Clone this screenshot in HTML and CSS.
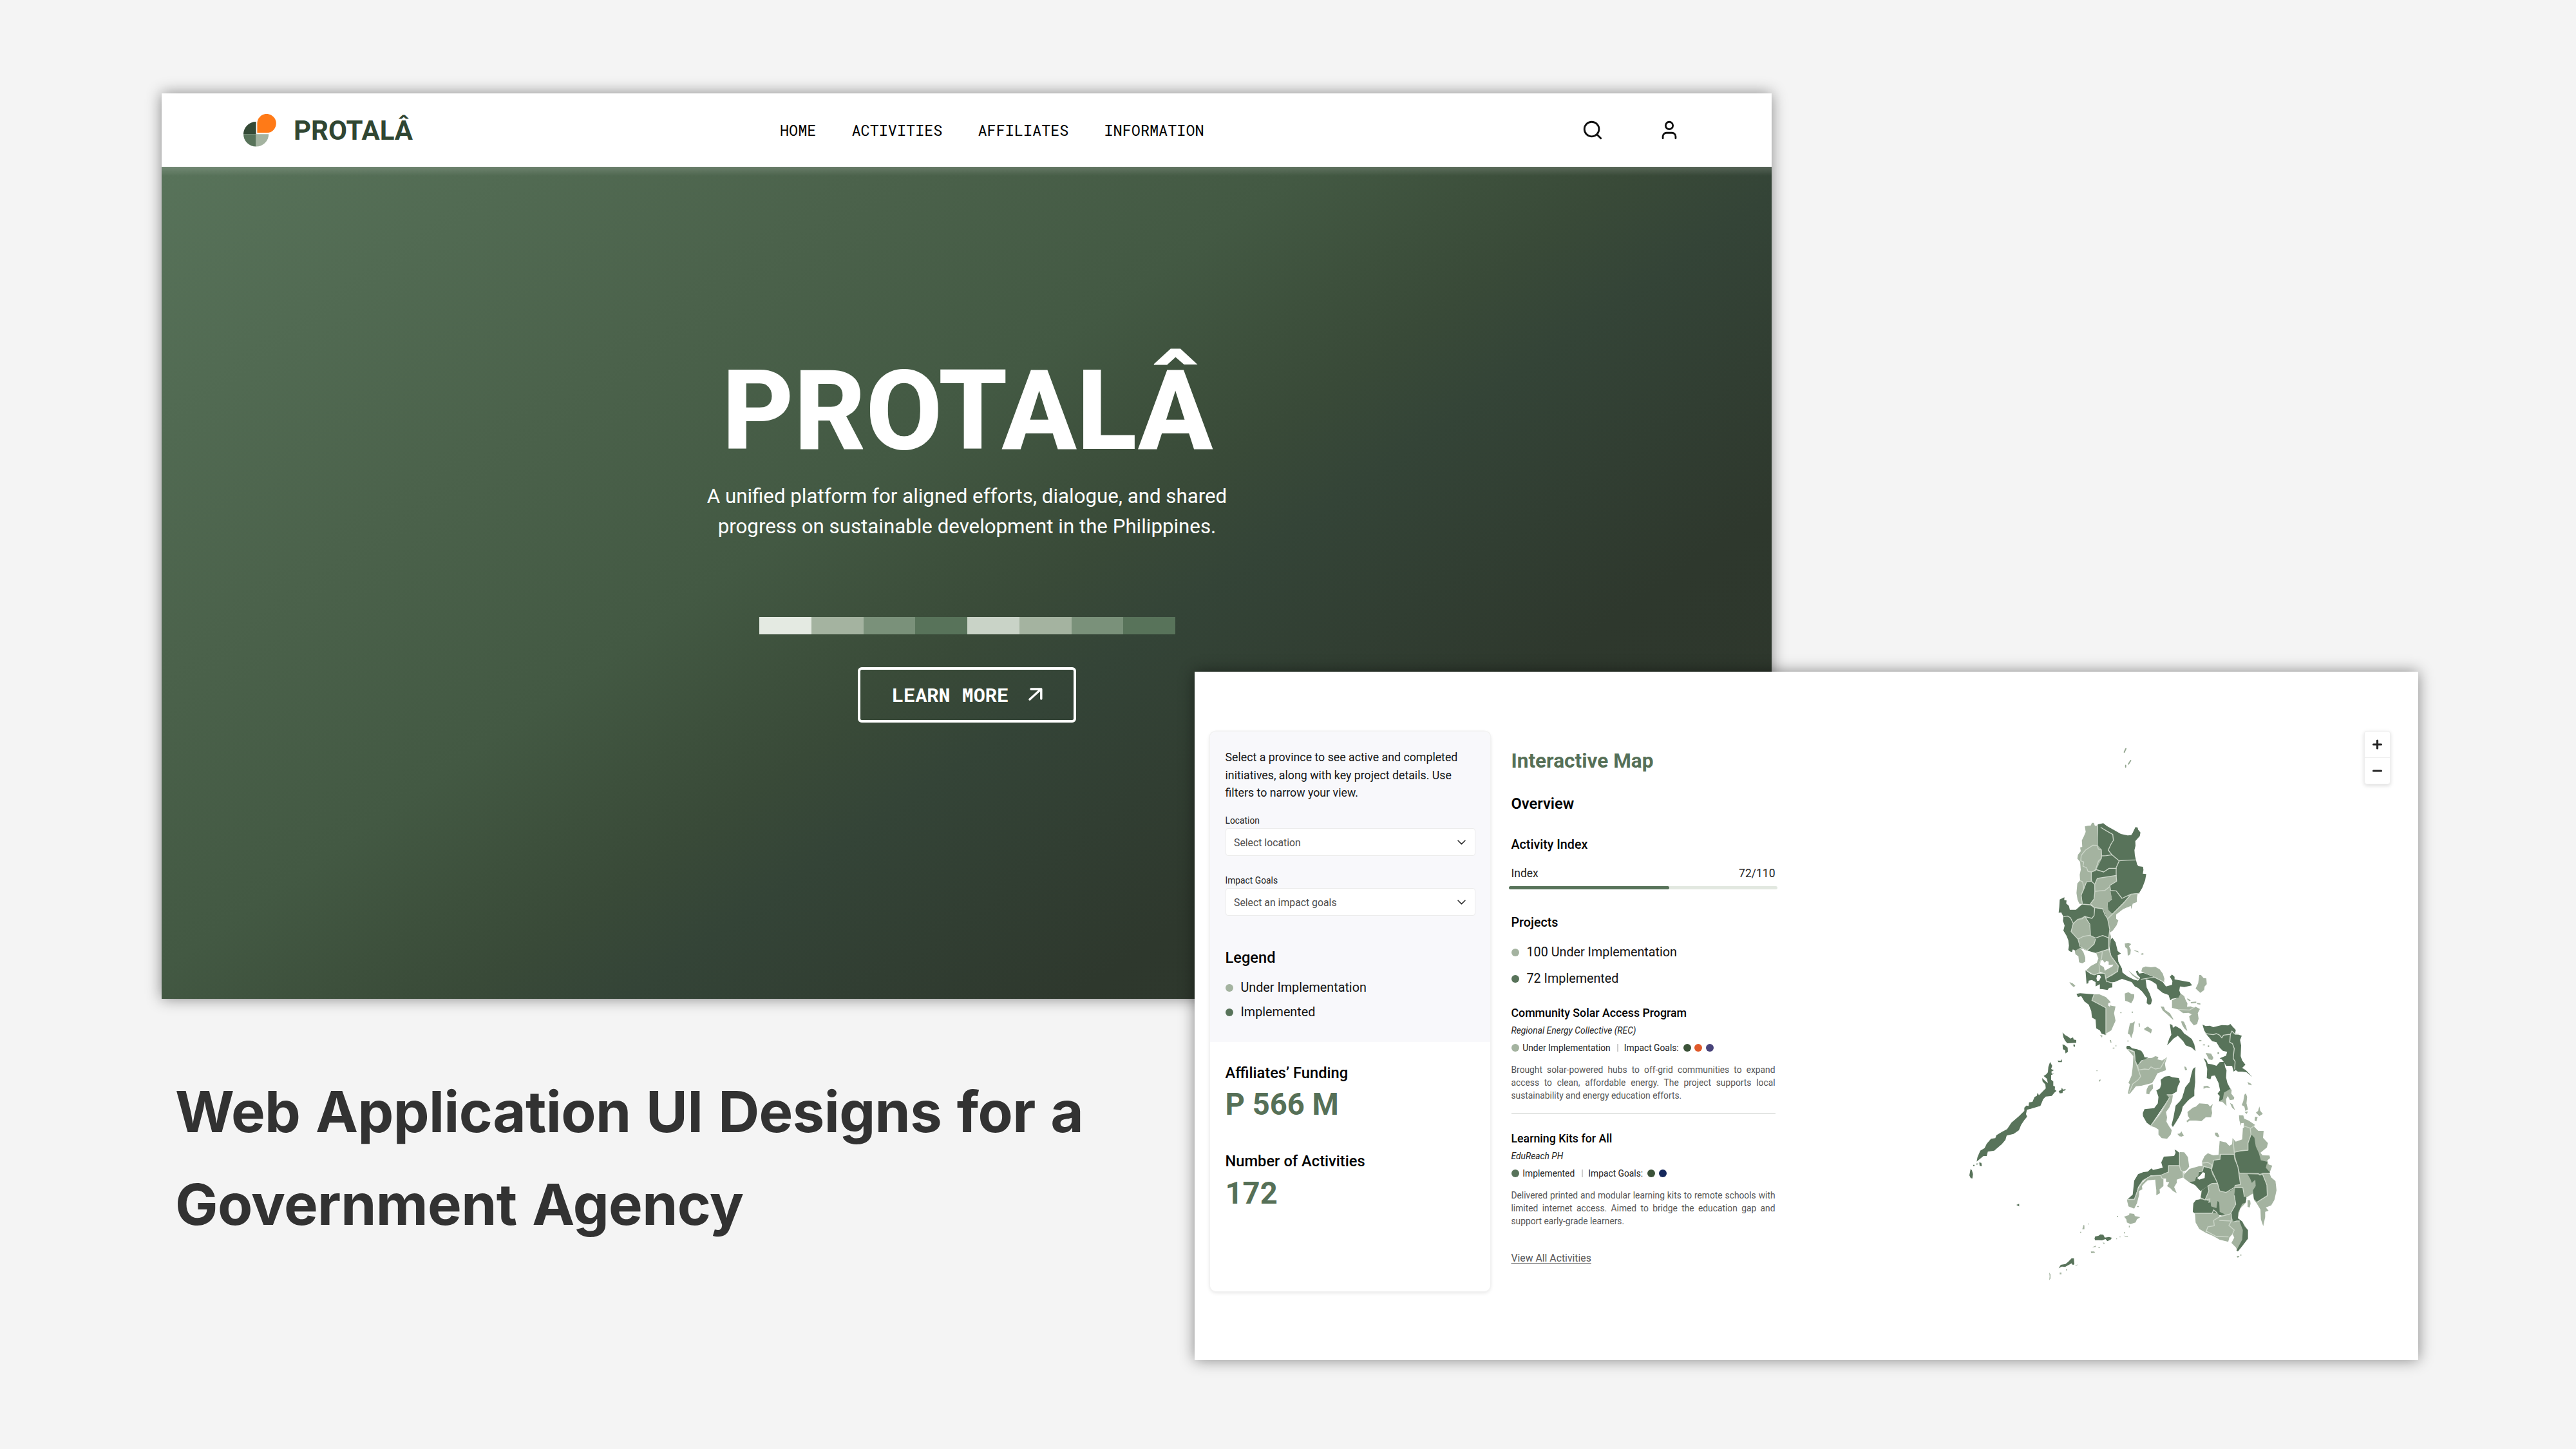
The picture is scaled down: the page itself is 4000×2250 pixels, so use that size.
FILE: index.html
```html
<!DOCTYPE html>
<html lang="en">
<head>
<meta charset="utf-8">
<title>Protalâ</title>
<link rel="stylesheet" href="styles.css">
</head>
<body>
<main class="canvas">
  <section class="window window-home">
    <header class="nav">
      <div class="brand">
        <svg class="brand-mark" viewBox="0 0 51 51" width="51" height="51">
          <path d="M19.6 12V31.3H0A19.6 19.3 0 0 1 19.6 12Z" fill="#344a36"/>
          <path d="M0 31.3H19.6V50.6A19.6 19.3 0 0 1 0 31.3Z" fill="#58735a"/>
          <path d="M19.6 31.3H39.2A19.6 19.3 0 0 1 19.6 50.6Z" fill="#a4b3a0"/>
          <path d="M20 31V15A15.500 15.500 0 1 1 36 30.500L36 31Z" fill="#fff"/>
          <path d="M21.400 29.300V14.600A14.700 14.700 0 1 1 36.200 29.300Z" fill="#ff7a17"/>
        </svg>
        <span class="brand-name">PROTALÂ</span>
      </div>
      <nav class="links"><a>HOME</a><a>ACTIVITIES</a><a>AFFILIATES</a><a>INFORMATION</a></nav>
      <div class="tools">
        <svg viewBox="0 0 24 24" class="icon"><circle cx="11" cy="11" r="8"/><path d="M21 21l-4.300-4.300"/></svg>
        <svg viewBox="0 0 24 24" class="icon"><circle cx="12" cy="7" r="4"/><path d="M5 21v-2a4 4 0 0 1 4-4h6a4 4 0 0 1 4 4v2"/></svg>
      </div>
    </header>
    <div class="hero">
      <h1 class="hero-title">PROTALÂ</h1>
      <p class="hero-sub">A unified platform for aligned efforts, dialogue, and shared<br>progress on sustainable development in the Philippines.</p>
      <div class="swatches"><i class="s1"></i><i class="s2"></i><i class="s3"></i><i class="s4"></i><i class="s5"></i><i class="s2"></i><i class="s3"></i><i class="s4"></i></div>
      <a class="button">LEARN MORE
        <svg viewBox="0 0 22 20" width="22" height="20"><path d="M2 18L19.500 2M4 2H19.800V17" fill="none" stroke="#fff" stroke-width="3.400" stroke-linecap="round" stroke-linejoin="round"/></svg>
      </a>
    </div>
  </section>

  <h2 class="headline">Web Application UI Designs for a<br>Government Agency</h2>

  <section class="window window-map">
    <aside class="card">
      <div class="filters">
        <p class="intro">Select a province to see active and completed initiatives, along with key project details. Use filters to narrow your view.</p>
        <label class="label">Location</label>
        <div class="select">Select location<svg viewBox="0 0 12 8" class="chevron"><path d="M1 1l5 5 5-5"/></svg></div>
        <label class="label label-second">Impact Goals</label>
        <div class="select">Select an impact goals<svg viewBox="0 0 12 8" class="chevron"><path d="M1 1l5 5 5-5"/></svg></div>
        <h3 class="legend-title">Legend</h3>
        <div class="key"><i class="dot light"></i>Under Implementation</div>
        <div class="key key-next"><i class="dot dark"></i>Implemented</div>
      </div>
      <div class="stats">
        <h4 class="stat-label">Affiliates’ Funding</h4>
        <p class="stat-value">P 566 M</p>
        <h4 class="stat-label stat-second">Number of Activities</h4>
        <p class="stat-value">172</p>
      </div>
    </aside>
    <div class="details">
      <h2 class="map-title">Interactive Map</h2>
      <h3 class="overview">Overview</h3>
      <h4 class="sub activity">Activity Index</h4>
      <div class="index-row"><span>Index</span><span>72/110</span></div>
      <div class="track"><div class="fill"></div></div>
      <h4 class="sub projects">Projects</h4>
      <div class="key count-first"><i class="dot light"></i>100 Under Implementation</div>
      <div class="key count-next"><i class="dot dark"></i>72 Implemented</div>
      <article class="project">
        <h5 class="project-title">Community Solar Access Program</h5>
        <p class="org">Regional Energy Collective (REC)</p>
        <div class="status"><i class="dot light"></i><span class="state">Under Implementation</span><i class="bar"></i><span class="goals">Impact Goals:</span><i class="dot forest"></i><i class="dot orange"></i><i class="dot violet"></i></div>
        <p class="desc">Brought solar-powered hubs to off-grid communities to expand access to clean, affordable energy. The project supports local sustainability and energy education efforts.</p>
      </article>
      <hr class="rule">
      <article class="project second">
        <h5 class="project-title">Learning Kits for All</h5>
        <p class="org">EduReach PH</p>
        <div class="status"><i class="dot dark"></i><span class="state">Implemented</span><i class="bar"></i><span class="goals">Impact Goals:</span><i class="dot forest"></i><i class="dot navy"></i></div>
        <p class="desc">Delivered printed and modular learning kits to remote schools with limited internet access. Aimed to bridge the education gap and support early-grade learners.</p>
      </article>
      <a class="view-all">View All Activities</a>
    </div>
    <div class="map">
      <svg class="islands" viewBox="3020 1136 620 870" width="620" height="870">
        <!-- Batanes -->
        <g class="hair"><path d="M3298.500 1168l2.600-5.500M3305 1186.500l3.500-5.500M3300.700 1188.500v2.500"/></g>
        <!-- Luzon, Mindoro, Bicol -->
        <g transform="translate(3030 1230) scale(.33333)">
          <g class="fl">
            <path d="M622,160 L635,157 650,155 655,143 664,143 668,155 675,158 683,150 680,245 700,268 700,310 672,368 652,372 652,415 630,418 620,450 605,480 610,522 596,520 588,500 583,470 587,425 600,412 598,385 603,362 600,325 587,310 590,292 603,275 600,258 610,255 608,225 618,205 626,185Z"/>
            <path d="M885,835 L890,818 905,812 930,816 950,814 970,825 985,845 993,870 990,885 945,860 905,845Z"/>
            <path d="M575,738 L600,725 615,745 624,770 624,790 610,797 595,793 592,765 578,755Z"/>
            <path d="M550,885 L565,890 578,902 570,908 558,898ZM808,705 L825,702 838,708 828,718 836,735 834,755 822,763 820,730 810,722ZM850,735l20,6 4,6-18,-6ZM882,753l12,-3 2,5-8,3Z"/>
            <path d="M825,830 L850,852 875,868 868,872 842,852Z"/>
            <path d="M808,938 L825,932 838,940 852,942 852,955 846,970 838,983 822,976 810,972Z"/>
            <path d="M1155,852 L1163,852 1175,866 1188,868 1190,895 1180,905 1178,922 1160,935 1138,915 1150,890Z"/>
            <path d="M1028,970 L1060,955 1068,938 1085,950 1090,965 1100,985 1098,1000 1115,998 1130,1005 1138,1000 1158,1010 1148,1030 1152,1055 1145,1080 1130,1087 1112,1065 1108,1045 1120,1035 1105,1028 1080,1030 1055,1012 1028,1005Z"/>
            <path d="M1100,960l15,10-4,4-12,-8ZM1115,978l26,-2 0,6-24,2ZM1143,982l17,2 0,6-14,-2Z"/>
            <path d="M975,998 L990,1000 996,1015 1018,1030 1035,1058 1032,1060 1005,1035 985,1018Z"/>
            <path d="M1070,1068 L1082,1070 1092,1088 1098,1112 1085,1100 1076,1085Z"/>
            <path d="M832,1078 L845,1074 855,1068 851,1090 848,1115 838,1147 832,1130 822,1125Z"/>
            <path d="M898,1102 L915,1092 935,1106 930,1124 918,1116 900,1108Z"/>
            <path d="M872,1078h6v16h-4ZM787,1025h6v5h-6ZM840,1022h6v6h-6ZM820,1157h6v5h-6ZM692,1130l12,4-2,10ZM738,1155l6,0 2,12-4,0ZM752,1190l8,0 0,5-8,0ZM765,1178h4v7h-4Z"/>
          </g>
          <g class="fd">
            <path d="M683,150 L708,145 725,158 760,178 790,195 822,202 838,200 845,190 852,175 858,163 868,165 870,175 881,188 878,205 857,228 858,250 853,270 855,295 860,316 866,338 872,345 893,348 895,362 892,380 908,382 903,410 890,445 875,470 840,475 750,568 730,548 728,515 748,500 740,460 735,440 668,430 655,415 652,372 672,368 700,310 700,268 680,245Z"/>
            <path d="M630,418 L652,415 668,430 665,500 648,525 612,522 605,480 620,450Z"/>
            <path d="M505,500 L522,492 527,490 526,503 537,505 535,518 548,530 552,548 580,548 610,522 648,525 668,538 710,545 728,590 738,640 735,730 675,750 632,738 600,725 578,738 566,733 562,745 552,742 545,735 548,715 545,690 537,670 522,645 528,622 520,600 522,580 512,560 500,562 503,535Z"/>
            <path d="M740,690 L750,678 765,700 775,740 790,752 775,760 778,790 795,822 797,840 820,858 850,873 870,878 880,865 865,850 860,835 868,832 875,845 895,842 945,862 985,885 1000,905 1028,898 1030,880 1018,860 1028,850 1040,860 1040,872 1080,880 1110,885 1122,900 1085,908 1065,905 1062,925 1068,940 1058,958 1030,962 1020,970 1012,945 985,935 960,915 955,895 930,878 905,872 910,910 925,940 935,970 930,988 920,990 910,983 912,960 890,930 870,912 855,905 840,885 795,870 760,885 725,888 718,870 775,835 778,810 745,765 738,730Z"/>
            <path d="M625,830 L650,848 665,852 690,845 715,845 722,885 750,890 750,910 735,912 728,922 705,918 692,917 692,895 672,905 672,885 655,875 640,878 638,890 630,893Z"/>
            <path d="M583,940 L600,937 665,942 655,970 720,1005 720,1132 700,1125 692,1110 675,1100 672,1060 655,1050 652,1020 640,990 620,975 605,950 590,955Z"/>
            <path d="M1018,1080 L1030,1085 1032,1098 1045,1090 1070,1105 1085,1125 1100,1135 1120,1150 1132,1175 1138,1207 1120,1190 1092,1180 1080,1160 1055,1135 1035,1148 1020,1165 1005,1180 1015,1148 1025,1130Z"/>
          </g>
          <g class="fl">
            <path d="M680,402 L768,388 770,415 738,435 742,460 748,498 728,515 730,548 750,568 840,475 868,472 864,495 864,512 845,520 838,545 836,530 800,545 768,570 768,590 778,598 770,620 752,645 738,655 744,672 742,700 735,730 733,680 738,640 728,590 710,548 668,538 648,520 665,500 668,430Z"/>
            <path d="M620,578 L632,595 645,620 648,665 672,685 665,708 632,738 605,725 590,685 558,650 568,612 590,592Z"/>
            <path d="M675,750 L733,732 745,765 778,810 775,835 750,855 720,868 715,845 695,838 665,852 628,830 650,810 678,795 685,775Z"/>
            <path d="M665,942 L690,942 720,955 740,975 745,995 765,998 758,1030 765,1065 745,1110 720,1125 720,1005 655,970Z"/>
          </g>
          <g class="fw">
            <path d="M695,785 L705,782 715,795 722,786 733,790 733,805 755,803 750,812 715,832 710,815 693,805Z"/>
            <path d="M680,852l12,0 5,10-8,16-10,2-3,-12ZM732,982l8,-2 6,8-8,12-8,-6Z"/>
          </g>
          <g class="bl">
            <path d="M680,155V245M697,165L725,182 752,197 755,225 745,240 731,270 748,292 782,320 768,352 768,390M603,320L605,295 625,270 660,247 680,248 685,266 698,268 700,297 722,296 748,292M700,297L698,310 685,322 672,362 655,372 637,370 630,352 613,345 617,325 603,320"/>
            <path d="M782,320L820,317 860,316M672,360L710,372 735,355 768,355M652,372V415L668,430 669,462 665,498 648,520M669,462L715,458 738,440M680,402L768,388 770,415 738,435 742,458 768,460 795,495 838,475 875,472M668,430L680,402M835,478L800,520 728,590"/>
            <path d="M600,412L612,418 617,450 630,418 652,415M617,450L605,480 610,522 648,525 668,540 665,575 655,588 630,582 622,578M525,580L540,577 555,585 568,612M568,612L590,592 610,590 622,578 632,595 645,615 648,665M568,612L558,650 590,685 600,720 632,738 665,708 672,685M590,685L615,672 645,667 672,680 705,668 735,680"/>
            <path d="M668,538L705,543 715,570 728,590 738,640 733,680 733,732M675,750L733,732 745,765 778,810 775,835 720,868M703,745L700,775 688,800 690,840M632,832L665,852 690,843 715,845 722,880 750,890M885,872L945,862 993,885M665,942L655,970 720,1005V1130M1058,1013L1110,1015 1130,1003"/>
          </g>
        </g>
        <!-- Visayas and Mindanao -->
        <g transform="translate(3300 1480) scale(.33333)">
          <g class="fl">
            <path d="M375,465 L400,468 411,488 405,498 390,495Z"/>
            <path d="M458,650 L475,640 490,630 496,638 494,655 508,672 506,682 488,685 478,665 470,680 472,712 460,700 452,692 440,692 452,680ZM488,698l12,6 12,28-14,-12Z"/>
            <path d="M290,740 L315,720 330,715 345,700 385,703 395,715 408,703 402,725 405,745 400,765 375,765 355,783 330,780 300,780 290,788 285,782 300,770 292,758Z"/>
            <path d="M195,660 L222,662 218,690 205,720 190,740 195,765 192,785 205,808 217,825 212,845 195,865 170,862 155,845 155,822 140,812 118,805 150,765 205,675Z"/>
            <path d="M243,842 L255,840 262,830 268,842 274,850 262,855 252,853ZM418,836l12,0 9,18-8,4-12,-10Z"/>
            <path d="M10,448 L45,465 48,500 58,522 80,500 100,490 125,488 140,480 155,484 150,495 172,500 195,485 185,515 190,545 150,560 135,590 125,605 75,618 50,620 22,655 12,655 22,610 15,605 30,570 35,530 38,480Z"/>
            <path d="M108,618 L128,610 130,630 115,648 112,658 98,655 100,635Z"/>
            <path d="M562,653 L568,670 565,700 572,728 560,735 555,715 543,708 550,690 555,660ZM556,740l16,-3 -6,12ZM625,714l4,20 12,15-16,10-16,-16 10,-8ZM605,762l12,2 -6,20-8,-4Z"/>
            <path d="M275,528l8,2 6,14-10,2ZM262,316l12,4 16,42-16,-16ZM365,620l18,-2 14,10-20,-2-12,6ZM570,600l16,8 4,8-16,-4ZM345,405h10v5h-10ZM362,425h10v5h-10ZM385,430h6v8h-6ZM430,462h8v8h-8Z"/>
            <path d="M530,755 L550,756 555,772 575,780 605,800 600,808 620,828 645,828 642,860 665,885 660,905 630,930 640,942 672,943 675,955 662,965 668,985 685,990 672,1025 680,1045 700,1062 705,1105 695,1150 680,1175 655,1185 668,1200 652,1205 652,1230 643,1272 632,1240 630,1195 612,1165 600,1150 595,1120 562,1140 560,1165 535,1190 525,1235 545,1250 570,1290 570,1330 525,1388 515,1370 495,1350 508,1325 500,1308 485,1325 480,1345 440,1335 410,1318 375,1303 345,1285 328,1255 325,1212 315,1205 318,1165 350,1145 355,1110 325,1080 298,1067 275,1050 270,1035 300,1005 345,992 360,992 358,970 370,945 385,932 410,942 435,940 440,875 470,882 485,898 498,890 500,862 515,878 545,868 548,820 538,800 532,780Z"/>
            <path d="M255,927 L275,928 292,950 298,995 285,1012 268,1018 270,1045 240,1055 240,1070 228,1090 240,1118 222,1108 210,1095 195,1085 205,1068 190,1065 190,1050 178,1050 178,1085 160,1100 162,1118 145,1128 145,1105 142,1080 140,1055 105,1058 90,1072 78,1085 80,1100 65,1108 65,1125 55,1165 42,1190 15,1180 8,1150 45,1145 65,1085 110,1040 165,1035 200,1020 202,990 252,990Z"/>
            <path d="M570,1150l12,2 2,15-4,18-10,-3Z"/>
            <path d="M520,1410l10,0 2,6-10,2ZM537,1403h4v7h-4Z"/>
          </g>
          <g class="fd">
            <path d="M360,333 L375,340 395,338 410,345 450,335 480,337 490,330 500,342 515,358 512,375 543,385 535,405 540,430 538,480 545,500 560,520 545,535 562,545 592,577 565,555 545,552 525,552 515,545 505,552 498,525 470,525 462,510 450,495 440,490 470,478 475,460 455,455 440,440 425,415 405,410 380,380 368,360Z"/>
            <path d="M365,488 L378,498 385,515 405,518 425,525 440,508 462,506 465,530 472,545 470,580 476,605 490,632 460,650 455,680 437,692 440,665 430,655 442,640 435,605 418,570 402,572 397,588 380,582 382,540 375,510Z"/>
            <path d="M327,530 L325,560 326,600 322,640 322,665 300,680 290,690 268,715 262,740 250,765 235,790 222,810 216,800 225,765 235,710 255,690 265,675 280,625 300,600 308,565 315,540Z"/>
            <path d="M165,590 L185,575 205,572 220,578 250,582 255,600 245,620 240,645 215,660 195,660 205,675 118,803 100,790 83,760 82,745 90,727 135,722 152,700 155,670 145,640 162,630 168,610Z"/>
            <path d="M5,440 L8,432 20,432 32,443 55,448 75,455 85,470 90,485 108,486 90,496 75,500 58,522 48,500 45,465 30,450 8,448Z"/>
            <path d="M448,937 L505,937 508,960 525,995 537,1078 512,1082 508,1095 495,1105 470,1115 440,1105 435,1080 418,1050 402,1010 412,965 442,960Z"/>
            <path d="M365,995 L400,1005 405,1030 430,1072 405,1075 385,1085 350,1108 325,1080 298,1067 325,1062 330,1045 340,1040 345,1018 362,1015Z"/>
            <path d="M385,1085 L390,1108 380,1130 372,1150 352,1138 358,1105ZM318,1165 L330,1150 350,1147 375,1150 398,1162 400,1180 425,1188 430,1155 438,1160 440,1205 465,1217 440,1222 428,1210 405,1210 325,1212 315,1205Z"/>
            <path d="M512,1092 L548,1092 555,1130 565,1140 562,1162 545,1168 535,1190 525,1210 525,1235 545,1250 555,1272 572,1290 572,1330 545,1365 525,1390 518,1385 545,1335 548,1290 532,1248 505,1252 490,1215 515,1170 508,1130Z"/>
            <path d="M588,845 L602,860 608,900 622,930 632,965 662,972 655,1000 675,1022 620,1028 535,1025 522,985 508,928 570,920 572,885Z"/>
            <path d="M570,1030 L640,1032 660,1080 660,1130 615,1160 600,1145 595,1105 608,1085 606,1055 590,1070 582,1050Z"/>
            <path d="M230,915 L240,920 252,930 252,990 202,990 200,1020 165,1035 120,1035 80,1060 60,1090 45,1145 12,1145 35,1125 42,1060 60,1030 85,1020 105,1018 122,1003 130,1010 175,1000 168,975 180,948 228,945 235,930Z"/>
          </g>
          <g class="fw"><path d="M335,1048 L350,1035 362,1020 372,1025 370,1048 345,1055ZM540,793l12,-2 2,20-8,8-6,-12ZM438,1222h10v8h-10Z"/></g>
          <g class="bl">
            <path d="M375,375L410,380 425,375 440,382 450,395 458,382 490,378 497,363 512,378 530,378M490,378L487,415 500,422 508,445 503,490 512,505 510,540"/>
            <path d="M12,449L42,458 46,500 62,545 72,575 60,590 35,610 20,648M60,545L90,540 110,542 120,530 140,540 165,535 190,490M58,522L62,545M195,660H220M205,675L165,745 118,805"/>
            <path d="M503,870L508,928 540,920 572,918 572,885 586,845 582,815 552,805M582,818L602,803M532,1025L620,1027 628,1034 640,1026 672,1026M508,928L512,960 525,995 537,1078 512,1082 510,1092 548,1092 555,1135M442,937H508M442,937V960L412,965 402,1010 430,1072"/>
            <path d="M358,978L385,975 402,985 402,1003 365,993 360,1015 345,1018M385,1085L405,1073 430,1072 440,1108 470,1115 508,1092M385,1085L390,1108 372,1150 352,1140M372,1150L395,1145 390,1162M325,1212H405L412,1196 428,1210M375,1303L385,1275 415,1270 412,1245 440,1228 490,1215 515,1170 508,1130M378,1295L425,1320 480,1322M440,1245L495,1248 483,1268 508,1290 500,1308M495,1215V1245M532,1248L520,1248 505,1252"/>
            <path d="M640,1030L660,1080 662,1130 615,1160M253,930V990L258,1010 268,1018 272,1045M202,1020V990H252M10,1148H42L62,1095 85,1058 120,1038 165,1035 200,1020M165,1035L172,1050 188,1050M270,1045L275,1020"/>
          </g>
        </g>
        <!-- Palawan and the Sulu sea -->
        <g transform="translate(3020 1580) scale(.33333)">
          <g class="fd">
            <path d="M490,207 L500,225 495,240 508,245 496,252 498,262 510,262 495,268 495,290 505,298 505,318 513,322 512,335 520,342 510,350 498,365 470,368 458,380 445,412 400,425 382,430 378,450 383,462 370,478 355,500 345,525 320,542 288,550 282,570 265,590 230,620 200,625 195,645 180,645 148,671 152,650 165,620 185,608 195,588 215,565 235,562 240,548 265,533 290,520 310,490 345,460 370,435 370,420 380,410 390,412 392,395 408,393 418,370 428,365 432,350 438,362 470,330 468,312 455,298 453,282 470,298 480,305 475,285 460,272 472,265 480,255 482,230Z"/>
            <path d="M548,70 L560,82 575,90 585,98 597,92 600,103 612,105 612,118 570,120 560,108 552,92ZM548,125 L558,128 572,140 573,160 562,167 560,152 550,148ZM598,126h8v10h-6ZM525,200l14,2 6,-8 0,14-16,0ZM530,342 L542,338 545,326 550,336 563,333 560,340 550,342 548,352 535,353Z"/>
            <path d="M160,675l10,2 2,16-10,-2ZM145,680l12,0-8,6ZM132,686h6v6h-6ZM120,705 L126,712 131,730 128,750 120,748 114,735ZM333,873L346,868 346,880Z"/>
            <path d="M697,1030 L700,1020 715,1017 725,1010 738,1012 745,1025 765,1022 778,1026 772,1035 757,1042 748,1032 732,1038 715,1037 700,1038ZM530,1168 L540,1152 562,1148 575,1138 590,1122 601,1122 603,1150 596,1153 590,1145 560,1162 545,1160Z"/>
          </g>
          <g class="fl">
            <path d="M835,928 L858,920 860,912 882,915 885,925 910,930 895,940 888,955 865,962 848,955 845,940Z"/>
            <path d="M486,1188l6,8 0,20-6,8 2,-18ZM680,1090l16,0 4,6-18,2ZM686,1070l16,-7 2,6ZM735,1048l10,2-4,6ZM646,966l4,2 0,18-10,0ZM802,924h5v6h-5ZM535,1188h8v8h-8ZM564,1173h5v5h-5ZM605,1158l12,-8 0,4ZM717,292l8,-4 0,6-6,6ZM630,998h5v5h-5ZM666,960h5v4h-5ZM832,1015l12,6 10,-4-4,6-8,0ZM857,970h4v8h-4ZM814,1020h4v4h-4ZM834,1000h5v6h-5ZM798,1029h4v4h-4ZM715,1071h8v3h-8ZM895,878h8v5h-8ZM706,246h5v4h-5Z"/>
          </g>
        </g>
      </svg>
      <div class="zoom">
        <svg viewBox="0 0 39 40" class="zoom-btn"><path d="M13.500 20H25.500M19.500 14V26"/></svg>
        <svg viewBox="0 0 39 40" class="zoom-btn zoom-out"><path d="M13.500 20H25.500"/></svg>
      </div>
    </div>
  </section>
</main>
</body>
</html>
```

FILE: styles.css
```css
* { box-sizing: border-box; }
body, h1, h2, h3, h4, h5, p { margin: 0; }
body { background: #f4f4f4; font-family: Roboto, "Liberation Sans", sans-serif; color: #111; }

.canvas { position: relative; width: 4000px; height: 2250px; overflow: hidden; }
.window { position: absolute; box-shadow: 0 0 22px rgba(0, 0, 0, .45); }

/* Home window */
.window-home { left: 251px; top: 145px; width: 2500px; height: 1406px; display: flex; flex-direction: column; }
.nav { height: 114px; background: #fff; display: grid; grid-template-columns: 833px 1fr auto; align-items: center; padding: 0 142px 0 127px; }
.brand { display: flex; align-items: center; gap: 27px; }
.brand-name { font-size: 42px; line-height: 50px; font-weight: 700; color: #304632; padding-top: 2px; }
.links { display: flex; gap: 55px; font-family: "Roboto Mono", "DejaVu Sans Mono", monospace; font-size: 23.5px; line-height: 30px; color: #000; }
.tools { display: flex; gap: 85px; }
.icon { width: 34px; height: 34px; fill: none; stroke: #111; stroke-width: 2; stroke-linecap: round; stroke-linejoin: round; }
.hero { flex: 1; display: flex; flex-direction: column; align-items: center; padding-top: 293px; color: #fff; text-align: center;
  background: linear-gradient(rgba(255, 255, 255, .16), rgba(255, 255, 255, 0) 14px), linear-gradient(145deg, #58735a 0%, #4b624b 26%, #435943 41%, #3d503c 48%, #394a38 53%, #344437 59%, #2e382d 75%, #2d352b 100%); }
.hero-title { font-size: 172px; line-height: 172px; font-weight: 800; letter-spacing: .3px; padding-left: 3px; }
.hero-sub { margin-top: 23px; font-size: 31.25px; line-height: 47px; padding-left: 1px; }
.swatches { margin-top: 117px; width: 646px; height: 26.5px; display: flex; position: relative; left: 1px; }
.swatches i { flex: 1; }
.s1 { background: #e4eae2; }
.s2 { background: #a4b3a0; }
.s3 { background: #7a917a; }
.s4 { background: #58735a; }
.s5 { background: #c9d3c7; }
.button { margin-top: 51px; width: 339px; height: 86px; border: 4px solid #fff; border-radius: 6px; display: flex; align-items: center; justify-content: center; gap: 31px; font-family: "Roboto Mono", "DejaVu Sans Mono", monospace; font-size: 30.2px; font-weight: 700; padding: 0 0 2px 2px; }

.headline { position: absolute; left: 272px; top: 1654px; font-family: Inter, "Liberation Sans", sans-serif; font-weight: 700; font-size: 88.6px; line-height: 144px; letter-spacing: -.6px; word-spacing: 3.2px; color: #323232; white-space: nowrap; }

/* Map window */
.window-map { left: 1855px; top: 1043px; width: 1900px; height: 1069px; background: #fff; padding: 93px 43px 0 24px; display: flex; align-items: flex-start; }
.card { width: 435px; height: 869px; border-radius: 9px; overflow: hidden; background: #fff; box-shadow: 0 0 0 1.500px #f2f2f2, 0 2px 6px rgba(0, 0, 0, .12); }
.filters { height: 481.5px; padding: 27px 23.5px 0; background: #f8f8fb; }
.intro { font-size: 17.78px; line-height: 27.6px; color: #151515; }
.label { display: block; margin-top: 18.400px; font-size: 13.8px; line-height: 20px; color: #222; }
.label-second { margin-top: 27.7px; }
.select { margin-top: 2.1px; height: 43px; border: 1.500px solid #ececec; border-radius: 4px; background: #fff; display: flex; align-items: center; justify-content: space-between; padding: 1px 14px 0 12.500px; font-size: 15.8px; color: #4d4d4d; }
.chevron { width: 13px; height: 9px; fill: none; stroke: #333; stroke-width: 1.5; stroke-linecap: round; stroke-linejoin: round; }
.legend-title { margin: 49.5px 0 18.3px; font-size: 23.65px; line-height: 30px; font-weight: 500; color: #000; }
.key { display: flex; align-items: center; gap: 12px; font-size: 19.75px; line-height: 28px; }
.key-next { margin-top: 10px; }
.dot { width: 12px; height: 12px; border-radius: 50%; flex: none; }
.light { background: #a4b3a0; }
.dark { background: #58735a; }
.forest { background: #3c5339; }
.orange { background: #e05a2b; }
.violet { background: #48437a; }
.navy { background: #15285c; }
.stats { padding: 33.4px 23.5px 0; }
.stat-label { font-size: 23.7px; line-height: 30px; font-weight: 500; color: #000; }
.stat-second { margin-top: 45px; }
.stat-value { margin-top: 6.500px; font-size: 47.2px; line-height: 56px; font-weight: 700; color: #567057; }

.details { width: 410px; margin-left: 32.5px; padding-top: 26.2px; }
.map-title { font-size: 31.55px; line-height: 40px; font-weight: 700; color: #567057; }
.overview { margin-top: 31px; font-size: 23.65px; line-height: 30px; font-weight: 600; color: #000; }
.sub { font-size: 19.7px; line-height: 28px; font-weight: 500; color: #000; }
.activity { margin-top: 34.4px; }
.index-row { margin-top: 18.700px; display: flex; justify-content: space-between; font-size: 17.5px; line-height: 24px; color: #222; }
.track { margin: 7.4px -3.5px 0; height: 5px; border-radius: 3px; background: #e2e8e0; }
.fill { width: 59.7%; height: 5px; border-radius: 3px; background: #58735a; }
.projects { margin-top: 38.3px; }
.count-first { margin-top: 17.6px; }
.count-next { margin-top: 13.700px; }
.project { margin-top: 26.9px; }
.project-title { font-size: 17.75px; line-height: 24px; font-weight: 500; color: #000; }
.org { margin-top: 5.300px; font-size: 13.8px; line-height: 20px; font-style: italic; color: #222; }
.status { margin-top: 6.5px; display: flex; align-items: center; gap: 5.800px; font-size: 13.8px; line-height: 20px; color: #222; }
.bar { width: 2px; height: 12px; background: #ccc; margin: 0 3px 0 4.500px; }
.goals { margin-right: 1px; }
.desc { margin-top: 15px; font-size: 13.8px; line-height: 19.900px; text-align: justify; color: #555; }
.rule { margin: 16.3px 0 0; border: 0; height: 2px; background: #e3e5e3; }
.second { margin-top: 26.2px; }
.view-all { display: inline-block; margin-top: 36.2px; font-size: 15.77px; line-height: 22px; color: #555; text-decoration: underline; text-underline-offset: 2px; }

.map { flex: 1; height: 870px; position: relative; padding-left: 263.5px; }
.islands { display: block; }
.fd { fill: #58735a; }
.fl { fill: #a4b3a0; }
.fw { fill: #fff; }
.bl { fill: none; stroke: #ccd6c9; stroke-width: 4; stroke-linejoin: round; stroke-linecap: round; }
.hair { fill: none; stroke: #93a68f; stroke-width: 1.8; stroke-linecap: round; }
.zoom { position: absolute; right: 0; top: -1px; width: 41px; height: 83px; border: 1.500px solid #eee; border-radius: 4px; background: #fff; box-shadow: 0 2px 6px rgba(0, 0, 0, .14); display: flex; flex-direction: column; }
.zoom-btn { width: 100%; flex: 1; min-height: 0; fill: none; stroke: #262626; stroke-width: 3.2; stroke-linecap: round; }
.zoom-out { border-top: 1.500px solid #eee; }
```
